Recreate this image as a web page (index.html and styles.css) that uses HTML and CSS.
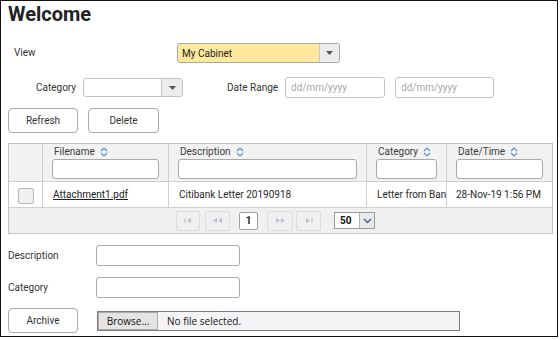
FILE: index.html
```html
<!DOCTYPE html>
<html lang="en">
<head>
<meta charset="utf-8">
<title>Welcome</title>
<link rel="stylesheet" href="styles.css">
</head>
<body>
<div class="frame">
  <h1 class="title">Welcome</h1>

  <div class="row row-view">
    <span class="lbl lbl-view">View</span>
    <div class="select select-yellow">
      <span class="sel-text">My Cabinet</span>
      <span class="sel-arrow"><svg width="7" height="4" viewBox="0 0 7 4"><path d="M0 0h7L3.5 4z" fill="#555"/></svg></span>
    </div>
  </div>

  <div class="row row-filter">
    <span class="lbl lbl-cat">Category</span>
    <div class="select select-cat">
      <span class="sel-text"></span>
      <span class="sel-arrow"><svg width="7" height="4" viewBox="0 0 7 4"><path d="M0 0h7L3.5 4z" fill="#555"/></svg></span>
    </div>
    <span class="lbl lbl-range">Date Range</span>
    <div class="input date">dd/mm/yyyy</div>
    <div class="input date date2">dd/mm/yyyy</div>
  </div>

  <div class="row row-actions">
    <button class="btn btn-refresh">Refresh</button>
    <button class="btn btn-delete">Delete</button>
  </div>

  <table class="grid">
    <colgroup>
      <col class="c-check"><col class="c-file"><col class="c-desc"><col class="c-cat"><col class="c-date">
    </colgroup>
    <thead>
      <tr>
        <th></th>
        <th><span class="th-label">Filename <svg class="sort" width="8" height="10" viewBox="0 0 8 10"><path d="M1 4L4 1L7 4M1 6L4 9L7 6" fill="none" stroke="#5a8fc8" stroke-width="1.2"/></svg></span><div class="filter"></div></th>
        <th><span class="th-label">Description <svg class="sort" width="8" height="10" viewBox="0 0 8 10"><path d="M1 4L4 1L7 4M1 6L4 9L7 6" fill="none" stroke="#5a8fc8" stroke-width="1.2"/></svg></span><div class="filter"></div></th>
        <th><span class="th-label">Category <svg class="sort" width="8" height="10" viewBox="0 0 8 10"><path d="M1 4L4 1L7 4M1 6L4 9L7 6" fill="none" stroke="#5a8fc8" stroke-width="1.2"/></svg></span><div class="filter"></div></th>
        <th><span class="th-label">Date/Time <svg class="sort" width="8" height="10" viewBox="0 0 8 10"><path d="M1 4L4 1L7 4M1 6L4 9L7 6" fill="none" stroke="#5a8fc8" stroke-width="1.2"/></svg></span><div class="filter"></div></th>
      </tr>
    </thead>
    <tbody>
      <tr>
        <td class="td-check"><span class="checkbox"></span></td>
        <td><a class="file-link">Attachment1.pdf</a></td>
        <td>Citibank Letter 20190918</td>
        <td>Letter from Bank</td>
        <td class="td-date">28-Nov-19 1:56 PM</td>
      </tr>
    </tbody>
    <tfoot>
      <tr>
        <td colspan="5" class="pager-cell">
          <div class="pager">
            <span class="pbtn pbtn-first"><svg width="8" height="5" viewBox="0 0 8 5"><path d="M1 0v5" stroke="#b9c0ca" stroke-width="1"/><path d="M7 0v5L3 2.5z" fill="#b9c0ca"/></svg></span>
            <span class="pbtn pbtn-prev"><svg width="9" height="5" viewBox="0 0 9 5"><path d="M4 0v5L0 2.5zM9 0v5L5 2.5z" fill="#b9c0ca"/></svg></span>
            <span class="pbtn pbtn-page">1</span>
            <span class="pbtn pbtn-next"><svg width="9" height="5" viewBox="0 0 9 5"><path d="M0 0v5L4 2.5zM5 0v5L9 2.5z" fill="#b9c0ca"/></svg></span>
            <span class="pbtn pbtn-last"><svg width="8" height="5" viewBox="0 0 8 5"><path d="M1 0v5L5 2.5z" fill="#b9c0ca"/><path d="M7 0v5" stroke="#b9c0ca" stroke-width="1"/></svg></span>
            <span class="pagesize"><span class="ps-val">50</span><span class="ps-arrow"><svg width="9" height="6" viewBox="0 0 9 6"><path d="M1 1L4.5 4.5L8 1" fill="none" stroke="#3e5f8f" stroke-width="1.4"/></svg></span></span>
          </div>
        </td>
      </tr>
    </tfoot>
  </table>

  <div class="form">
    <div class="frow">
      <span class="flbl">Description</span>
      <div class="input finput"></div>
    </div>
    <div class="frow frow-2">
      <span class="flbl">Category</span>
      <div class="input finput"></div>
    </div>
    <div class="frow frow-3">
      <button class="btn btn-archive">Archive</button>
      <div class="file">
        <span class="browse">Browse...</span>
        <span class="file-text">No file selected.</span>
      </div>
    </div>
  </div>
</div>
</body>
</html>
```

FILE: styles.css
```css
* { box-sizing: border-box; }

html, body {
  margin: 0;
  padding: 0;
  background: #fff;
}

body {
  font-family: Roboto, "Liberation Sans", sans-serif;
  font-size: 10px;
  color: #333;
}

.frame {
  width: 558px;
  height: 337px;
  border: 1px solid #111;
  padding: 1px 0 0 7px;
  overflow: hidden;
}

.title {
  margin: 0;
  font: 700 20px/24px Roboto, "Liberation Sans", sans-serif;
  color: #222;
  height: 24px;
}

.row {
  display: flex;
  align-items: center;
}

.lbl { display: inline-block; line-height: 12px; }

.row-view { margin-top: 17px; height: 20px; }
.lbl-view { margin-left: 6px; width: 163px; }

.select {
  display: flex;
  border: 1px solid #a9a9a9;
  border-radius: 3px;
  overflow: hidden;
  background: #fff;
}
.sel-text {
  flex: 1;
  padding-left: 4px;
  display: flex;
  align-items: center;
  color: #222;
}
.sel-arrow {
  display: flex;
  align-items: center;
  justify-content: center;
  background: #ececec;
  border-left: 1px solid #c6c6c6;
}

.select-yellow { width: 163px; height: 20px; background: #fde99d; }
.select-yellow .sel-arrow { width: 20px; }

.row-filter { margin-top: 14px; height: 21px; }
.lbl-cat { margin-left: 28px; width: 47px; }
.select-cat { width: 100px; height: 19px; border-color: #c2c2c2; }
.select-cat .sel-arrow { width: 21px; }
.lbl-range { margin-left: 44px; width: 58px; }

.input {
  border: 1px solid #c4c4c4;
  border-radius: 3px;
  background: #fff;
}
.date {
  width: 100px;
  height: 21px;
  padding-left: 5px;
  color: #a8a8a8;
  display: flex;
  align-items: center;
}
.date2 { margin-left: 10px; width: 99px; }

.row-actions { margin-top: 10px; }

.btn {
  font: 10px Roboto, "Liberation Sans", sans-serif;
  color: #333;
  background: #fff;
  border: 1px solid #a8a8a8;
  border-radius: 4px;
  height: 25px;
  padding: 0;
  margin: 0;
}
.btn-refresh { width: 70px; }
.btn-delete { width: 71px; margin-left: 10px; }

.grid {
  margin-top: 10px;
  width: 544px;
  table-layout: fixed;
  border-collapse: separate;
  border-spacing: 0;
  border-top: 1px solid #c4c4c4;
  border-left: 1px solid #c4c4c4;
}
.c-check { width: 34px; }
.c-file { width: 126px; }
.c-desc { width: 198px; }
.c-cat { width: 80px; }
.c-date { width: 106px; }

.grid th, .grid td {
  border-right: 1px solid #cfcfcf;
  border-bottom: 1px solid #cfcfcf;
  padding: 0;
}
.grid th:last-child, .grid td:last-child { border-right-color: #c4c4c4; }

.grid th {
  background: #f2f2f2;
  font-weight: 400;
  text-align: left;
  vertical-align: top;
  padding: 2px 9px 2px 9px;
  color: #3a3a3a;
}
.th-label {
  display: flex;
  align-items: center;
  height: 12px;
  line-height: 12px;
  margin-left: 2px;
  white-space: nowrap;
}
.sort { margin-left: 5px; }
.filter {
  margin-top: 1px;
  height: 20px;
  border: 1px solid #a9a9a9;
  border-radius: 3px;
  background: #fff;
}

.grid tbody td {
  height: 26px;
  padding: 0 0 0 10px;
  white-space: nowrap;
  overflow: hidden;
  vertical-align: middle;
  color: #2a2a2a;
}
.grid tbody .td-check { padding: 0; text-align: center; }
.grid tbody .td-date { padding-left: 9px; }

.checkbox {
  display: inline-block;
  width: 16px;
  height: 16px;
  margin-top: 2px;
  vertical-align: middle;
  background: #f0f0f0;
  border: 1px solid #b9b9b9;
  border-radius: 2px;
}

.file-link {
  color: #222;
  text-decoration: underline;
}

.grid tfoot td {
  background: #f0f0f0;
  border-bottom-color: #c4c4c4;
  height: 26px;
}
.pager {
  display: flex;
  align-items: center;
  height: 25px;
  padding-left: 167px;
}
.pbtn {
  display: flex;
  align-items: center;
  justify-content: center;
  height: 20px;
  border: 1px solid #dcdcdc;
  border-radius: 2px;
}
.pbtn-first { width: 24px; }
.pbtn-prev { width: 25px; margin-left: 5px; }
.pbtn-page {
  width: 19px;
  height: 18px;
  margin-left: 9px;
  border-color: #a0a0a0;
  background: #fff;
  font-weight: 700;
  color: #222;
}
.pbtn-next { width: 26px; margin-left: 9px; }
.pbtn-last { width: 25px; margin-left: 3px; }

.pagesize {
  display: flex;
  margin-left: 13px;
  width: 41px;
  height: 17px;
  border: 1px solid #9a9a9a;
  background: #fff;
}
.ps-val {
  width: 24px;
  padding-left: 5px;
  font-weight: 700;
  color: #111;
  display: flex;
  align-items: center;
}
.ps-arrow {
  flex: 1;
  display: flex;
  align-items: center;
  justify-content: center;
  background: #e9e9e9;
  border-left: 1px solid #b4b4b4;
}

.form { margin-top: 11px; }
.frow {
  display: flex;
  align-items: center;
  height: 21px;
}
.frow-2 { margin-top: 11px; }
.frow-3 { margin-top: 10px; height: 25px; }
.flbl { width: 88px; color: #333; }
.finput { width: 144px; height: 21px; border-color: #ababab; }

.btn-archive { width: 70px; }

.file {
  display: flex;
  align-items: stretch;
  margin-left: 19px;
  width: 363px;
  height: 20px;
  border: 1px solid #7a7a7a;
  background: #f4f4f7;
  font-family: "Open Sans", "Noto Sans", sans-serif;
  font-size: 10px;
  color: #111;
}
.browse {
  display: flex;
  align-items: center;
  justify-content: center;
  width: 60px;
  background: #e4e4e4;
  border: 1px solid #acacac;
}
.file-text {
  display: flex;
  align-items: center;
  margin-left: 9px;
}
```
